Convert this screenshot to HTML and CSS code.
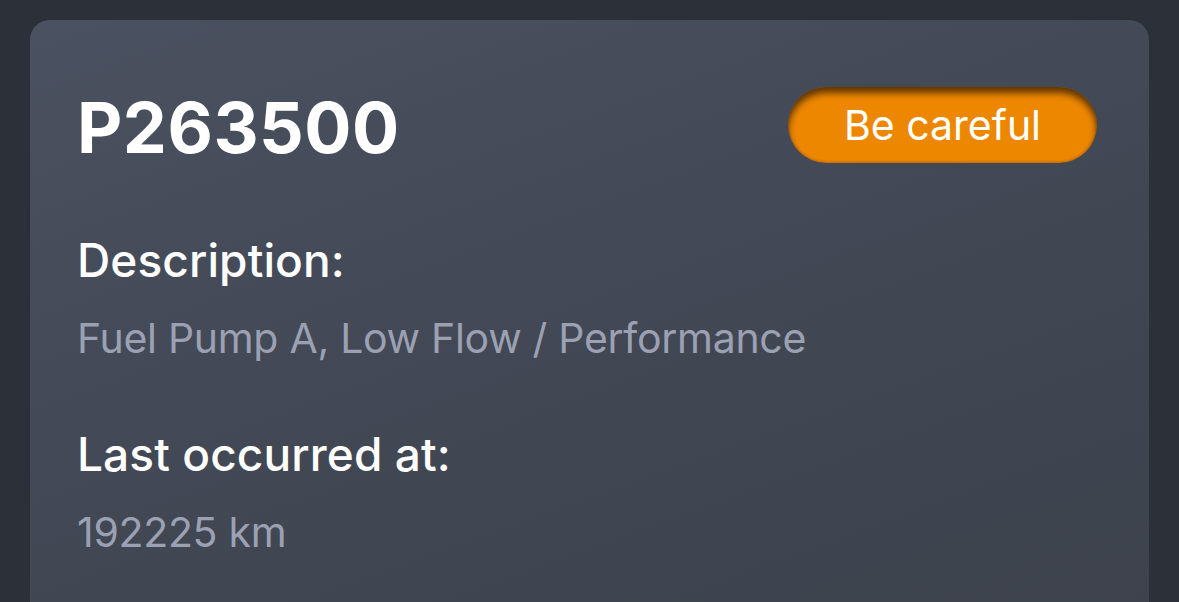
FILE: index.html
```html
<!DOCTYPE html>
<html lang="en">
<head>
    <meta charset="UTF-8">
    <meta name="viewport" content="width=device-width, initial-scale=1.0">
    <title>Error code</title>
    <link rel="stylesheet" href="styles.css">
</head>
<body>

<div class="card">
    <div class="card-header">
        <h1 class="code">P263500</h1>
        <span class="badge">Be careful</span>
    </div>

    <div class="field">
        <h2 class="label">Description:</h2>
        <p class="value">Fuel Pump A, Low Flow / Performance</p>
    </div>

    <div class="field">
        <h2 class="label">Last occurred at:</h2>
        <p class="value">192225 km</p>
    </div>
</div>

</body>
</html>
```

FILE: styles.css
```css
body {
    font-family: Inter, "Noto Sans", sans-serif;
    margin: 0;
    padding: 20px 30px 0 30px;
    background-color: #2c3039;
    height: 100vh;
    box-sizing: border-box;
    overflow: hidden;
}

.card {
    background: linear-gradient(160deg, #4a5160 0%, #414753 50%, #3c414b 100%);
    border-radius: 20px;
    padding: 68px 52px 80px 47px;
    min-height: 700px;
    box-sizing: border-box;
    color: white;
}

.card-header {
    display: flex;
    justify-content: space-between;
    align-items: center;
    margin-bottom: 66px;
}

.code {
    margin: 0;
    font-size: 70px;
    font-weight: 700;
    line-height: 80px;
    letter-spacing: 0.5px;
}

.badge {
    display: inline-block;
    width: 309px;
    height: 76px;
    line-height: 76px;
    text-align: center;
    font-size: 41px;
    color: white;
    background-color: #ee8700;
    border-radius: 38px;
    box-shadow: inset 0 6px 7px rgba(0, 0, 0, 0.6), inset 0 -1px 3px rgba(0, 0, 0, 0.2);
    margin-top: -6px;
}

.field {
    margin-bottom: 65px;
}

.label {
    margin: 0;
    font-size: 46px;
    font-weight: 500;
    line-height: 52px;
    letter-spacing: 0.1px;
}

.value {
    margin: 27px 0 0 0;
    font-size: 41px;
    font-weight: 400;
    line-height: 50px;
    letter-spacing: -0.3px;
    color: #9ba1b3;
}
```
